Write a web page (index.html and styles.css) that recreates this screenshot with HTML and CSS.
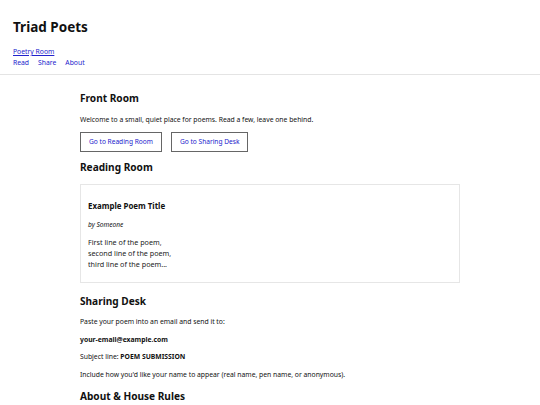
FILE: index.html
```html
<!DOCTYPE html>
<html lang="en">
<head>
  <meta charset="UTF-8" />
  <meta name="viewport" content="width=device-width, initial-scale=1.0" />
  <title>Triad Poets</title>
  <link rel="stylesheet" href="styles.css">
</head>
<body>
  <header class="site-header">
    <h1 class="site-title">Triad Poets</h1>
    <nav class="site-nav">
      <a class="brand" href="#top">Poetry Room</a>
      <ul class="nav-links">
        <li><a href="#reading">Read</a></li>
        <li><a href="#sharing">Share</a></li>
        <li><a href="#about">About</a></li>
      </ul>
    </nav>
  </header>

  <main class="content">
    <section id="front">
      <h2>Front Room</h2>
      <p>Welcome to a small, quiet place for poems. Read a few, leave one behind.</p>
      <div class="actions">
        <a class="btn" href="#reading">Go to Reading Room</a>
        <a class="btn" href="#sharing">Go to Sharing Desk</a>
      </div>
    </section>

    <section id="reading">
      <h2>Reading Room</h2>
      <article class="poem">
        <h3>Example Poem Title</h3>
        <p class="byline">by Someone</p>
        <p class="lines">First line of the poem,<br />
          second line of the poem,<br />
          third line of the poem...</p>
      </article>
    </section>

    <section id="sharing">
      <h2>Sharing Desk</h2>
      <p>Paste your poem into an email and send it to:</p>
      <p><strong>your-email@example.com</strong></p>
      <p>Subject line: <strong>POEM SUBMISSION</strong></p>
      <p>Include how you'd like your name to appear (real name, pen name, or anonymous).</p>
    </section>

    <section id="about">
      <h2>About &amp; House Rules</h2>
    </section>
  </main>
</body>
</html>
```

FILE: styles.css
```css
body {
  margin: 0;
  font-family: "Noto Sans", sans-serif;
  font-size: 6.8px;
  color: #111;
  background-color: #fff;
}
a {
  color: #2222cc;
}
.site-header {
  padding: 17px 13px 6px;
  border-bottom: 1px solid #e4e4e4;
}
.site-title {
  margin: 0;
  font-size: 13.5px;
  line-height: 20px;
}
.site-nav {
  margin-top: 9px;
  font-size: 6.8px;
  line-height: 11px;
}
.nav-links {
  list-style: none;
  margin: 0;
  padding: 0;
  display: flex;
  gap: 9px;
}
.nav-links a {
  text-decoration: none;
}
.content {
  max-width: 380px;
  margin: 0 auto;
  padding-top: 16px;
}
h2 {
  margin: 0;
  font-size: 10.1px;
  line-height: 15px;
}
p {
  margin: 8px 0 7px;
  line-height: 11px;
}
.actions {
  display: flex;
  gap: 9px;
  margin: 7px 0 8px;
}
.btn {
  display: inline-block;
  padding: 4px 8px;
  border: 1px solid #666;
  line-height: 10px;
  font-size: 6.6px;
  text-decoration: none;
}
.poem {
  margin: 9px 0 11px;
  padding: 7px 7px 5px;
  border: 1px solid #e6e6e6;
}
.poem h3 {
  margin: 8px 0 0;
  font-size: 7.9px;
  line-height: 12px;
}
.byline {
  margin: 8px 0 0;
  font-style: italic;
  font-size: 6.6px;
  line-height: 10px;
}
.lines {
  margin: 7px 0 7px;
  font-size: 7.2px;
  color: #222;
}
#sharing p {
  margin: 6.5px 0;
}
#sharing h2 + p {
  margin-top: 7px;
}
#about {
  margin-top: 9px;
}
```
